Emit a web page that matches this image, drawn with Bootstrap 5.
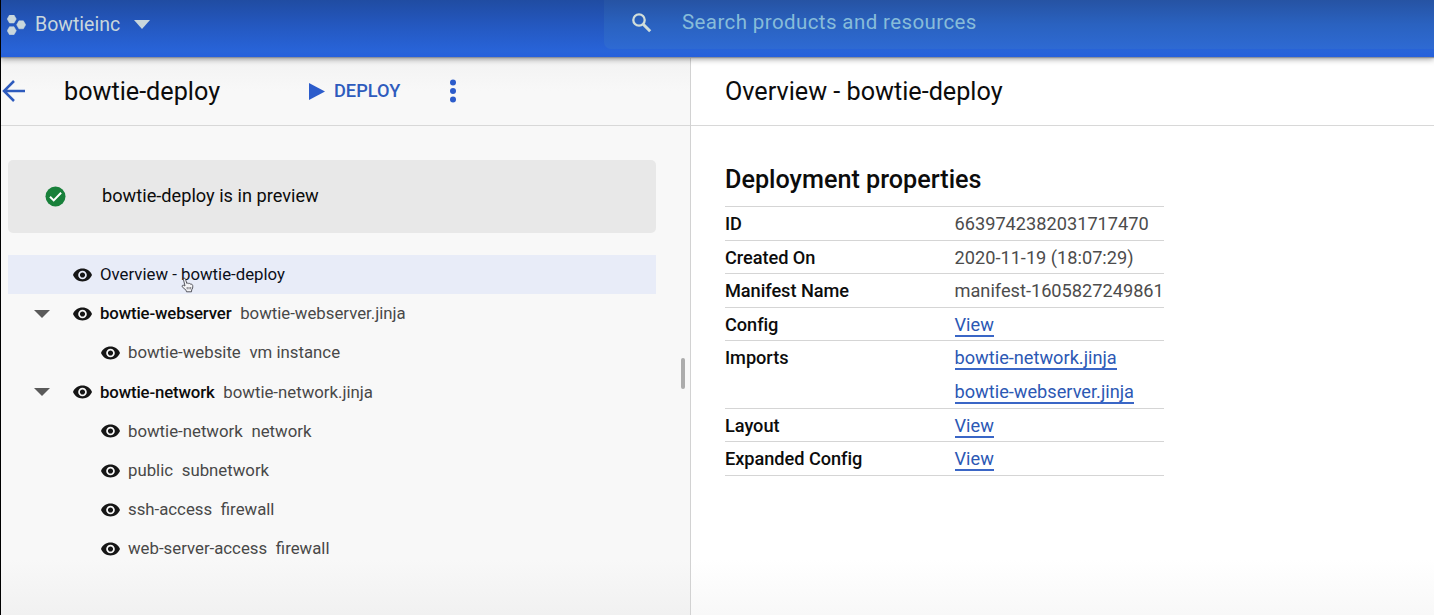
<!DOCTYPE html>
<html lang="en">
<head>
<meta charset="utf-8">
<meta name="viewport" content="width=device-width, initial-scale=1">
<title>bowtie-deploy</title>
<link href="https://cdn.jsdelivr.net/npm/bootstrap@5.3.0/dist/css/bootstrap.min.css" rel="stylesheet">
<style>
  body { font-family: Roboto, "Liberation Sans", sans-serif; color: #0c0c0c; height: 615px; background: #fff; }
  svg { display: block; flex: none; }
  .console { height: 615px; border-left: 1px solid #000; }
  .topbar { height: 57px; background: linear-gradient(#204ca2, #2458c0 45%, #2864d9 90%, #2660dc); box-shadow: 0 1px 1px #8f939c, 0 2px 6px rgba(0,0,0,.4); z-index: 2; }
  .project { width: 603px; height: 49px; padding-left: 6px; color: #c9d7dc; font-size: 19.5px; }
  .project-name { width: 85px; margin-left: 9px; }
  .project-caret { margin-left: 14px; }
  .search-box { height: 49px; background: linear-gradient(#2653a3, #2a62c0 50%, #2e6ad3); border-radius: 0 0 0 7px; color: #87bcd9; font-size: 20.5px; letter-spacing: .4px; padding: 0 0 4px 27px; }
  .side { width: 690px; background: linear-gradient(#f8f8f8 90%, #f1f1f1); border-right: 1px solid #d2d2d2; }
  .main-pane { background: linear-gradient(#fff 90%, #f8f8f8); }
  .pane-head { height: 69px; border-bottom: 1px solid #d8d8d8; }
  .title { font-size: 25.2px; line-height: 30px; margin: 0; padding-top: 1px; font-weight: 400; }
  .side .pane-head { background: linear-gradient(#f2f2f2, #f8f8f8 50%); }
  .deploy { color: #2e5bbd; font-size: 18.2px; font-weight: 500; padding-bottom: 1px; width: 68px; margin-left: 9px; }
  .notice { margin: 34px 34px 0 7px; height: 73px; background: #e8e8e8; border-radius: 5px; padding: 0 0 1px 37px; font-size: 18.2px; }
  .tree { margin: 22px 34px 0 7px; font-size: 16.8px; color: #484848; }
  .tree-row { height: 39.2px; padding-left: 64.5px; }
  .tree-row.leaf { padding-left: 92.5px; }
  .tree-row.branch { padding-left: 26px; }
  .tree-row.branch .twisty { margin-right: 22.5px; color: #5a5a5a; }
  .tree-row.active-row { background: #e8ecf8; color: #0c0f18; }
  .tree-row b { font-weight: 500; color: #0c0c0c; letter-spacing: -.14px; }
  .eye { margin-right: 8.5px; color: #161616; }
  .kind { margin-left: 8.7px; }
  .hand { left: 173px; top: 22px; }
  .grip { width: 4px; height: 31px; border-radius: 2px; background: #acacac; right: 5px; top: 301px; }
  .props { width: 439px; border-top: 1px solid #d5d5d5; font-size: 18.2px; }
  .props-title { font-size: 25.2px; line-height: 30px; font-weight: 500; margin: 39px 0 11px; }
  .prop { height: 33.6px; border-bottom: 1px solid #d5d5d5; }
  .prop.two-line { height: 67.2px; }
  .prop dt { width: 229.5px; font-weight: 500; line-height: 33px; letter-spacing: -.05px; }
  .prop dd { margin: 0; color: #4c4c4c; line-height: 33px; }
  .prop dd div + div { margin-top: .6px; }
  .prop a { color: #2c58b4; text-decoration: none; border-bottom: 2px solid #3a66c6; }
</style>
</head>
<body>
<svg width="0" height="0" class="position-absolute">
  <symbol id="eye" viewBox="1 4.5 22 15"><path fill="currentColor" d="M12 4.5C7 4.500 2.730 7.610 1 12c1.730 4.390 6 7.500 11 7.500s9.270-3.110 11-7.500c-1.730-4.390-6-7.500-11-7.500zM12 17c-2.760 0-5-2.240-5-5s2.240-5 5-5 5 2.240 5 5-2.240 5-5 5zm0-8c-1.660 0-3 1.340-3 3s1.340 3 3 3 3-1.340 3-3-1.340-3-3-3z"/></symbol>
  <symbol id="tri" viewBox="0 0 16 8"><path fill="currentColor" d="M0 0h16L8 8z"/></symbol>
</svg>
<div class="console d-flex flex-column overflow-hidden">
  <header class="topbar d-flex flex-shrink-0 position-relative">
    <div class="project d-flex align-items-center flex-shrink-0">
      <svg width="19" height="20" viewBox="0 0 19 20" fill="currentColor"><path d="M2.500 0h4.500l2.300 4-2.300 4H2.500L.2 4zM11.900 5.800h4.500l2.300 4-2.300 4h-4.500l-2.300-4zM2.500 11.700h4.500l2.300 4-2.300 4H2.500l-2.300-4z" stroke="currentColor" stroke-width=".5" stroke-linejoin="round"/></svg>
      <span class="project-name">Bowtieinc</span>
      <svg class="project-caret" width="16" height="9" viewBox="0 0 16 9"><path d="M0 0h16L8 9z" fill="currentColor"/></svg>
    </div>
    <div class="search-box d-flex align-items-center flex-grow-1">
      <svg width="21" height="21" viewBox="0 0 21 21" fill="none" stroke="#d1deda"><circle cx="8" cy="8" r="5.700" stroke-width="2.300"/><path d="M12.200 12.200l7 7" stroke-width="3"/></svg>
      <span style="margin-left:30px">Search products and resources</span>
    </div>
  </header>
  <div class="d-flex flex-grow-1">
    <aside class="side position-relative flex-shrink-0">
      <div class="pane-head d-flex align-items-center">
        <svg width="24" height="22" viewBox="0 0 24 22" fill="none" stroke="#2e5bbd" stroke-width="2.500"><path d="M24 11H3M13 1L3 11l10 10"/></svg>
        <h1 class="title" style="margin-left:39px;width:245px">bowtie-deploy</h1>
        <svg width="16" height="17" viewBox="0 0 16 17"><path d="M0 0l16 8.500L0 17z" fill="#2c5ccb"/></svg>
        <span class="deploy">DEPLOY</span>
        <svg style="margin-left:47px" width="8" height="24" viewBox="0 0 8 24" fill="#2c5ccb"><circle cx="4" cy="3.500" r="3"/><circle cx="4" cy="12" r="3"/><circle cx="4" cy="20.500" r="3"/></svg>
      </div>
      <div class="notice d-flex align-items-center">
        <svg width="21" height="21" viewBox="0 0 21 21"><circle cx="10.500" cy="10.500" r="10" fill="#18803a"/><path d="M5 10.700l3.700 3.700 7.400-7.700" fill="none" stroke="#fff" stroke-width="2"/></svg>
        <span style="margin-left:36px">bowtie-deploy is in preview</span>
      </div>
      <div class="tree">
        <div class="tree-row active-row d-flex align-items-center position-relative"><svg class="eye" width="19" height="14"><use href="#eye"/></svg>Overview - bowtie-deploy
          <svg class="hand position-absolute" width="13" height="16" viewBox="0 0 13 16"><path d="M4 9L2.500 2.800C2.200 1 4 .6 4.500 2.200L5.800 6.500c1-.8 1.700-.5 2 .2.900-.6 1.700-.2 1.900.6 1-.4 1.900.2 2 1.200.3 2-.2 3.300-1 4.300l-.2 2H5.500l-.4-1.500L1.200 9.800C.6 8.500 2 7.800 2.800 8.400z" fill="#f4f4f6" stroke="#55565e" stroke-width="1"/><path d="M6.200 10v2.300M8 10v2.300M9.700 10v2.300" stroke="#55565e" stroke-width=".8"/></svg>
        </div>
        <div class="tree-row branch d-flex align-items-center"><svg class="twisty" width="16" height="8"><use href="#tri"/></svg><svg class="eye" width="19" height="14"><use href="#eye"/></svg><b>bowtie-webserver</b><span class="kind">bowtie-webserver.jinja</span></div>
        <div class="tree-row leaf d-flex align-items-center"><svg class="eye" width="19" height="14"><use href="#eye"/></svg>bowtie-website<span class="kind">vm instance</span></div>
        <div class="tree-row branch d-flex align-items-center"><svg class="twisty" width="16" height="8"><use href="#tri"/></svg><svg class="eye" width="19" height="14"><use href="#eye"/></svg><b>bowtie-network</b><span class="kind">bowtie-network.jinja</span></div>
        <div class="tree-row leaf d-flex align-items-center"><svg class="eye" width="19" height="14"><use href="#eye"/></svg>bowtie-network<span class="kind">network</span></div>
        <div class="tree-row leaf d-flex align-items-center"><svg class="eye" width="19" height="14"><use href="#eye"/></svg>public<span class="kind">subnetwork</span></div>
        <div class="tree-row leaf d-flex align-items-center"><svg class="eye" width="19" height="14"><use href="#eye"/></svg>ssh-access<span class="kind">firewall</span></div>
        <div class="tree-row leaf d-flex align-items-center"><svg class="eye" width="19" height="14"><use href="#eye"/></svg>web-server-access<span class="kind">firewall</span></div>
      </div>
      <div class="grip position-absolute"></div>
    </aside>
    <main class="main-pane flex-grow-1">
      <div class="pane-head d-flex align-items-center" style="padding-left:34px"><h2 class="title">Overview - bowtie-deploy</h2></div>
      <section style="padding-left:34px">
        <h3 class="props-title">Deployment properties</h3>
        <dl class="props mb-0">
          <div class="prop d-flex"><dt>ID</dt><dd>6639742382031717470</dd></div>
          <div class="prop d-flex"><dt>Created On</dt><dd>2020-11-19 (18:07:29)</dd></div>
          <div class="prop d-flex"><dt>Manifest Name</dt><dd>manifest-1605827249861</dd></div>
          <div class="prop d-flex"><dt>Config</dt><dd><a href="#">View</a></dd></div>
          <div class="prop two-line d-flex"><dt>Imports</dt><dd><div><a href="#">bowtie-network.jinja</a></div><div><a href="#">bowtie-webserver.jinja</a></div></dd></div>
          <div class="prop d-flex"><dt>Layout</dt><dd><a href="#">View</a></dd></div>
          <div class="prop d-flex"><dt>Expanded Config</dt><dd><a href="#">View</a></dd></div>
        </dl>
      </section>
    </main>
  </div>
</div>
<script src="https://cdn.jsdelivr.net/npm/bootstrap@5.3.0/dist/js/bootstrap.bundle.min.js"></script>
</body>
</html>
